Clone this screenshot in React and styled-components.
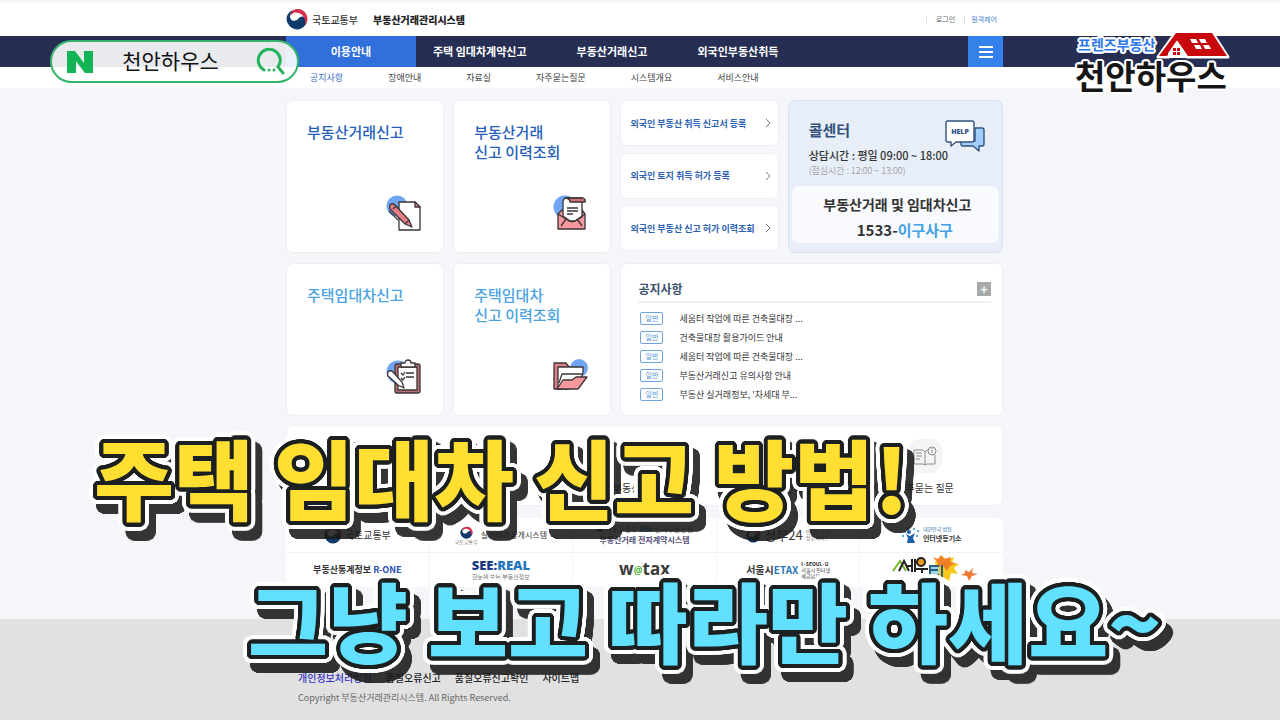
import React, { useState } from "react";
import styled, { createGlobalStyle } from "styled-components";

// text-shadow rings give the lettering a rounded outline
const ring = (radius, color, steps = 32) =>
	Array.from({ length: steps }, (_, i) => {
		const angle = (i / steps) * Math.PI * 2;
		const x = (Math.cos(angle) * radius).toFixed(1);
		const y = (Math.sin(angle) * radius).toFixed(1);
		return `${x}px ${y}px 0 ${color}`;
	}).join(", ");

const menu = ["이용안내", "주택 임대차계약신고", "부동산거래신고", "외국인부동산취득"];
const subMenu = ["공지사항", "장애안내", "자료실", "자주묻는질문", "시스템개요", "서비스안내"];
const notices = [
	"세움터 작업에 따른 건축물대장 ...",
	"건축물대장 활용가이드 안내",
	"세움터 작업에 따른 건축물대장 ...",
	"부동산거래신고 유의사항 안내",
	"부동산 실거래정보, '차세대 부...",
];
const foreignLinks = [
	"외국인 부동산 취득 신고서 등록",
	"외국인 토지 취득 허가 등록",
	"외국인 부동산 신고 허가 이력조회",
];
const footerLinks = ["개인정보처리방침", "품질오류신고", "품질오류신고확인", "사이트맵"];

const Taegeuk = ({ size = 22 }) => (
	<svg width={size} height={size} viewBox="0 0 24 24" aria-hidden="true">
		<path
			d="M6 3C1 6-1 12 2 17c3 6 10 8 15 5 4-2 6-6 5-10-1-3-5-4-8-1-2 3-5 4-8 2-3-3-2-7 2-10z"
			fill="#0c3a6b"
		/>
		<path d="M7 3c6-4 14-1 16 6 1 4 0 7-2 10 1-9-4-14-11-14-2 0-4 2-5 4 0-2 0-4 2-6z" fill="#d5304f" />
	</svg>
);

const PenPaperIcon = () => (
	<svg width="36" height="38" viewBox="0 0 36 38" stroke="#3c3434" strokeWidth="1.3" strokeLinejoin="round">
		<circle cx="11" cy="11" r="10.5" fill="#70a5f4" stroke="none" />
		<path d="M13 7h16l5 5v23H13z" fill="#fff" />
		<path d="M29 7v5h5z" fill="#f2949b" />
		<path d="M4 10c2-2 4-1 5 0l14 15 3 7-7-3L4 14q-1-2 0-4z" fill="#e57f87" />
		<path d="M3 16l9 9M19 29l4-4M7 14l3-3" fill="none" />
	</svg>
);

const MailIcon = () => (
	<svg width="36" height="38" viewBox="0 0 36 38" stroke="#3c3434" strokeWidth="1.3" strokeLinejoin="round">
		<circle cx="12" cy="12" r="11.5" fill="#70a5f4" stroke="none" />
		<path d="M5 19l4-4h20l3 4v15H5z" fill="#f6999f" />
		<path d="M10 21V7q0-4 4-4h15v19l-7 4h-5z" fill="#fff" />
		<path d="M13 3h17q3 1 2 4H17q0-3-4-4z" fill="#cf7078" />
		<path d="M5 19l11 7 3 1 3-1 10-7M8 31l5-7M29 31l-5-7" fill="none" />
		<path d="M14 13h11M14 16h11M14 19h6" />
	</svg>
);

const ClipboardIcon = () => (
	<svg width="36" height="38" viewBox="0 0 36 38" stroke="#3c3434" strokeWidth="1.3" strokeLinejoin="round">
		<circle cx="12" cy="14" r="11.5" fill="#70a5f4" stroke="none" />
		<rect x="9" y="6" width="25" height="29" rx="2" fill="#b96f77" />
		<path d="M12 9h19v23H12z" fill="#fff" />
		<path d="M15 9V5h4c0-4 6-4 6 0h4v4z" fill="#fff" />
		<path d="M15 15l2 2 2-3M15 20l2 2 2-3M20 15h8M20 19h8" fill="none" />
		<path d="M2 14c2-2 4-1 5 0l9 10 2 6-6-3L2 18q-1-2 0-4z" fill="#fff" />
	</svg>
);

const FolderIcon = () => (
	<svg width="36" height="38" viewBox="0 0 36 38" stroke="#3c3434" strokeWidth="1.3" strokeLinejoin="round">
		<circle cx="26" cy="10" r="9" fill="#70a5f4" stroke="none" />
		<path d="M1 31V5h12l3 4v22z" fill="#d98088" />
		<path d="M5 31V9h25v6l-3 8-20 8z" fill="#fff" />
		<path d="M6 25l3-9h20" fill="none" />
		<path d="M4 31l6-9h9l4-3h11l-9 12z" fill="#f6999f" />
	</svg>
);

const HelpIcon = () => (
	<svg width="40" height="32" viewBox="0 0 40 32" stroke="#34527f" strokeWidth="1.4" strokeLinejoin="round">
		<path d="M30 8h7q2 0 2 2v14q0 2-2 2h-3v5l-6-5H18q-2 0-2-2v-3h14z" fill="#9fd0fb" />
		<path d="M3 1h24q2 0 2 2v17q0 2-2 2H11l-5 4v-4H3q-2 0-2-2V3q0-2 2-2z" fill="#fff" />
		<text x="15" y="14" fontSize="7" fontWeight="800" fontFamily="Open Sans, sans-serif" textAnchor="middle" fill="#34527f" stroke="none">
			HELP
		</text>
	</svg>
);

const BookIcon = () => (
	<svg width="24" height="20" viewBox="0 0 24 20" fill="none" stroke="#8d8d8d" strokeWidth="1">
		<path d="M1 4h9l2 2 2-2h2M22 9v9H14l-2 1-2-1H1V4M12 6v13M3 7h6M3 10h6M3 13h4" />
		<circle cx="19" cy="5" r="4" />
		<path d="M19 4v3M19 2v1" />
	</svg>
);

const RoofIcon = () => (
	<svg width="74" height="29" viewBox="0 0 74 29">
		<path d="M2 27L20 2h36l16 25H31l-9-13-9 13z" fill="#c9080e" stroke="#fff" strokeWidth="3" strokeLinejoin="round" />
		<path d="M21 10l-9 13v5h18v-5z" fill="#fff" />
		<path d="M20 3L3 26h7L21 10l11 16h39L56 3z" fill="#c9080e" />
		<path d="M21 12l-9 12v3h19v-2z" fill="#fff" />
		<path d="M34 9h6l2 4h-6zM43 9h6l2 4h-6zM38 15h6l2 4h-6zM47 15h6l2 4h-6z" fill="#fff" />
		<path d="M17 18h3v3h-3zM21 18h3v3h-3zM17 22h3v3h-3zM21 22h3v3h-3z" fill="#c9080e" />
	</svg>
);

const SearchIcon = () => (
	<svg width="30" height="30" viewBox="0 0 30 30" fill="none" stroke="#27b35c" strokeWidth="3" strokeLinecap="round">
		<path d="M8 23A11 11 0 1 1 22 20l5 6" />
		<path d="M13 23h0M18 23h0" />
	</svg>
);

const CourtIcon = () => (
	<svg width="18" height="18" viewBox="0 0 18 18">
		<circle cx="7" cy="6" r="2" fill="#1c5fa8" />
		<path d="M4 8l4 2 5-3-2 5 2 5H5l1-5z" fill="#1c5fa8" />
		<path d="M2 5h2v2H2zM5 1h2v2H5zM11 2h2v2h-2zM15 4h2v2h-2zM14 9h2v2h-2zM0 9h2v2H0z" fill="#5aaee0" />
	</svg>
);

const SeumterLogo = () => (
	<svg width="94" height="32" viewBox="0 0 94 32">
		<path d="M50 7l5 1 2-6 5 4 7-3-2 6 7 1-5 4 4 6-7-1-2 8-6-4-6 4-1-7-5-2 5-4z" fill="#f9c81d" />
		<path d="M48 3l5 2 3-4 3 4 7-2-1 5 6 1-6 3-3 5-4-5-6 1 1-4z" fill="#f07f26" />
		<path d="M80 16l4 2 4-4-1 5 6 1-6 2-3 5-2-5-6-1 4-2z" fill="#ef7b35" />
		<path d="M8 17l7-10 6 10" fill="none" stroke="#79b829" strokeWidth="2" />
		<path d="M14 17l5-10 5 10M21 12h5M27 5v13M30 5v13" fill="none" stroke="#222" strokeWidth="2" />
		<circle cx="36" cy="8" r="4" fill="#f39b1e" stroke="#222" strokeWidth="2" />
		<path d="M31 15h12M37 15v4" stroke="#222" strokeWidth="2" />
		<path d="M45 12h9v9h-9z" fill="#9fd8ee" />
		<path d="M54 12h-9v9h9M45 16h8M57 11v12" fill="none" stroke="#2a5f7e" strokeWidth="2" />
	</svg>
);

const App = () => {
	const [query, setQuery] = useState("천안하우스");

	return (
		<Page>
			<GlobalStyle />
			<Header>
				<Shell>
					<Brand href="#">
						<Taegeuk />
						<Ministry>국토교통부</Ministry>
						<SystemName>부동산거래관리시스템</SystemName>
					</Brand>
					<UserLinks>
						<UserLink href="#">로그인</UserLink>
						<UserLink href="#" $blue>원격제어</UserLink>
					</UserLinks>
				</Shell>
			</Header>
			<NavBar>
				<Shell>
					{menu.map((item, i) => (
						<NavLink href="#" key={item} $active={i === 0}>{item}</NavLink>
					))}
					<MenuButton type="button" aria-label="전체메뉴">
						<svg width="14" height="12" viewBox="0 0 14 12" stroke="#fff" strokeWidth="2">
							<path d="M0 1h14M0 6h14M0 11h14" />
						</svg>
					</MenuButton>
				</Shell>
			</NavBar>
			<SubNav>
				<Shell>
					<SubList>
						{subMenu.map((item, i) => (
							<SubLink href="#" key={item} $active={i === 0}>{item}</SubLink>
						))}
					</SubList>
				</Shell>
			</SubNav>

			<Main>
				<Cards>
					<ServiceCard href="#">부동산거래신고<PenPaperIcon /></ServiceCard>
					<ServiceCard href="#">부동산거래<br />신고 이력조회<MailIcon /></ServiceCard>
					<LinkStack>
						{foreignLinks.map((item) => (
							<StackLink href="#" key={item}>
								{item}
								<svg width="6" height="10" viewBox="0 0 6 10" fill="none" stroke="#777">
									<path d="M1 1l4 4-4 4" />
								</svg>
							</StackLink>
						))}
					</LinkStack>
					<CallCenter>
						<CallTop>
							<CallTitle>콜센터</CallTitle>
							<HelpIcon />
						</CallTop>
						<CallHours>상담시간 : 평일 09:00 ~ 18:00</CallHours>
						<CallLunch>(점심시간 : 12:00 ~ 13:00)</CallLunch>
						<CallBox>
							<CallName>부동산거래 및 임대차신고</CallName>
							<CallNumber>1533-<span>이구사구</span></CallNumber>
						</CallBox>
					</CallCenter>
					<ServiceCard href="#" $light>주택임대차신고<ClipboardIcon /></ServiceCard>
					<ServiceCard href="#" $light>주택임대차<br />신고 이력조회<FolderIcon /></ServiceCard>
					<NoticeCard>
						<NoticeHead>
							<NoticeTitle>공지사항</NoticeTitle>
							<MoreButton type="button" aria-label="더보기">+</MoreButton>
						</NoticeHead>
						<NoticeList>
							{notices.map((item, i) => (
								<NoticeItem key={i}>
									<Tag>일반</Tag>
									<a href="#">{item}</a>
								</NoticeItem>
							))}
						</NoticeList>
					</NoticeCard>
				</Cards>

				<QuickLinks>
					<QuickLink href="#" $column={3}>부동산 실거래</QuickLink>
					<QuickLink href="#" $column={4}>이용 안내</QuickLink>
					<QuickLink href="#" $column={5}>
						<QuickIcon><BookIcon /></QuickIcon>
						자주묻는 질문
					</QuickLink>
				</QuickLinks>

				<Partners>
					<Partner href="#"><Taegeuk size={18} /><PartnerName $size={10}>국토교통부</PartnerName></Partner>
					<Partner href="#">
						<Stacked $center><Taegeuk size={13} /><Tiny>국토교통부</Tiny></Stacked>
						<PartnerName $size={8}>실거래가공개시스템</PartnerName>
					</Partner>
					<Partner href="#">
						<Stacked $center>
							<Tiny $size={7}><Taegeuk size={8} /> 국토교통부 <b>REB</b> 한국부동산원</Tiny>
							<PartnerName $size={8} $color="#55507a" $bold>부동산거래 전자계약시스템</PartnerName>
						</Stacked>
					</Partner>
					<Partner href="#">
						<Taegeuk size={15} />
						<PartnerName $size={13}>정부24</PartnerName>
						<Stacked><Tiny>민원안내 및</Tiny><Tiny>정부서비스</Tiny></Stacked>
					</Partner>
					<Partner href="#">
						<CourtIcon />
						<Stacked>
							<Tiny $color="#2b6ca8">대한민국 법원</Tiny>
							<PartnerName $size={7} $bold>인터넷등기소</PartnerName>
						</Stacked>
					</Partner>
					<Partner href="#">
						<PartnerName $size={9} $bold>부동산통계정보 <Latin $color="#2b4cb5">R-ONE</Latin></PartnerName>
					</Partner>
					<Partner href="#">
						<Stacked $center>
							<SeeReal>SEE:<span>REAL</span></SeeReal>
							<Tiny $size={6}>한눈에 보는 부동산정보</Tiny>
						</Stacked>
					</Partner>
					<Partner href="#"><Wetax>w<span>@</span>tax</Wetax></Partner>
					<Partner href="#">
						<PartnerName $size={10} $bold>서울시<Latin $color="#2b78b8">ETAX</Latin></PartnerName>
						<Stacked>
							<Tiny $color="#222"><b>I·SEOUL·U</b></Tiny>
							<Tiny $color="#333">서울시 인터넷</Tiny>
							<Tiny $color="#333">세금납부</Tiny>
						</Stacked>
					</Partner>
					<Partner href="#"><SeumterLogo /></Partner>
				</Partners>
			</Main>

			<Footer>
				<FooterInner>
					<FooterLinks>
						{footerLinks.map((item, i) => (
							<FooterLink href="#" key={item} $active={i === 0}>{item}</FooterLink>
						))}
					</FooterLinks>
					<Copyright>Copyright 부동산거래관리시스템. All Rights Reserved.</Copyright>
				</FooterInner>
			</Footer>

			<SearchPill onSubmit={(e) => e.preventDefault()}>
				<svg width="26" height="22" viewBox="0 0 26 22" fill="#12b456" aria-hidden="true">
					<path d="M0 0h8l9 12V0h9v22h-8L9 10v12H0z" />
				</svg>
				<SearchInput aria-label="검색어" value={query} onChange={(e) => setQuery(e.target.value)} />
				<SearchButton type="submit" aria-label="검색"><SearchIcon /></SearchButton>
			</SearchPill>

			<AgencyLogo>
				<AgencyTop><span>프렌즈부동산</span><RoofIcon /></AgencyTop>
				<AgencyName>천안하우스</AgencyName>
			</AgencyLogo>

			<Headline $top={428} $left={94} $fill="#ffdf32">주택 임대차 신고 방법!</Headline>
			<Headline $top={571} $left={248} $fill="#62e0ff">그냥 보고 따라만 하세요~</Headline>
		</Page>
	);
};

export default App;

const GlobalStyle = createGlobalStyle`
	* {
		box-sizing: border-box;
	}

	body {
		margin: 0;
		color: #333;
		font-family: "Noto Sans CJK KR", sans-serif;
		overflow: hidden;
	}

	a {
		color: inherit;
		text-decoration: none;
	}

	button, input {
		font-family: inherit;
	}

	svg {
		flex: none;
	}
`;

const Page = styled.div`
	position: relative;
	display: flex;
	flex-direction: column;
	min-height: 100vh;
	background: #f5f6f9;
	overflow: hidden;
`;

const Shell = styled.div`
	display: flex;
	align-items: stretch;
	max-width: 726px;
	margin: 0 auto;
	padding-left: 9px;
`;

const Header = styled.header`
	padding: 5px 0 6px;
	border-top: 3px solid #f5f6f8;
	background: #fff;
`;

const Brand = styled.a`
	display: flex;
	align-items: center;
	height: 22px;
`;

const Ministry = styled.span`
	margin-left: 4px;
	font-size: 10px;
	font-weight: 500;
`;

const SystemName = styled.strong`
	margin-left: 15px;
	color: #222;
	font-size: 10px;
	font-weight: 900;
`;

const UserLinks = styled.div`
	display: flex;
	align-items: center;
	margin-left: auto;
	padding-right: 6px;
`;

const UserLink = styled.a`
	margin-left: 9px;
	padding-left: ${(props) => (props.$blue ? 6 : 9)}px;
	border-left: 1px solid #ddd;
	color: ${(props) => (props.$blue ? "#4b8bd0" : "#666")};
	font-size: 7px;
	line-height: 7px;
`;

const NavBar = styled.nav`
	background: #262e54;
`;

const NavLink = styled.a`
	min-width: ${(props) => (props.$active ? 130 : 0)}px;
	padding: 0 ${(props) => (props.$active ? 0 : 33)}px 0 ${(props) => (props.$active ? 0 : 17)}px;
	background: ${(props) => (props.$active ? "#316fdb" : "transparent")};
	color: #fff;
	font-size: 11px;
	font-weight: 700;
	line-height: 31px;
	text-align: ${(props) => (props.$active ? "center" : "left")};
`;

const MenuButton = styled.button`
	display: flex;
	align-items: center;
	justify-content: center;
	width: 35px;
	margin-left: auto;
	padding: 0;
	border: none;
	background: #3481e9;
	cursor: pointer;
`;

const SubNav = styled.nav`
	background: #fff;
`;

const SubList = styled.div`
	display: flex;
	gap: 45px;
	padding-left: 24px;
`;

const SubLink = styled.a`
	color: ${(props) => (props.$active ? "#3b6fc9" : "#444")};
	font-size: 9px;
	line-height: 21px;
`;

const Main = styled.main`
	width: 100%;
	max-width: 726px;
	margin: 0 auto;
	padding: 12px 0 32px 9px;
`;

const Cards = styled.section`
	display: grid;
	grid-template-columns: 158fr 158fr 158fr 215fr;
	grid-auto-rows: 153px;
	gap: 10px 9px;
`;

const ServiceCard = styled.a`
	display: block;
	position: relative;
	padding: 21px 20px;
	border: 1px solid #edeff3;
	border-radius: 7px;
	background: #fff;
	color: ${(props) => (props.$light ? "#4aa3e2" : "#2460bb")};
	font-size: 15px;
	font-weight: 500;
	line-height: 20px;

	svg {
		position: absolute;
		right: 21px;
		bottom: 19px;
	}
`;

const LinkStack = styled.div`
	display: flex;
	flex-direction: column;
	justify-content: space-between;
	padding-bottom: 2px;
`;

const StackLink = styled.a`
	display: flex;
	align-items: center;
	justify-content: space-between;
	height: 46px;
	padding: 0 7px 0 9px;
	border: 1px solid #edeff3;
	border-radius: 7px;
	background: #fff;
	color: #2d62b3;
	font-size: 9px;
	font-weight: 700;
	white-space: nowrap;
`;

const CallCenter = styled.div`
	display: flex;
	flex-direction: column;
	padding: 19px 3px 9px;
	border: 1px solid #d7e2ee;
	border-radius: 7px;
	background: #e7eef7;
`;

const CallTop = styled.div`
	display: flex;
	justify-content: space-between;
	height: 26px;
	padding: 0 14px 0 17px;
`;

const CallTitle = styled.h2`
	margin: 0;
	color: #34527a;
	font-size: 15px;
	font-weight: 700;
	line-height: 20px;
`;

const CallHours = styled.p`
	margin: 0;
	padding-left: 17px;
	font-size: 11px;
	font-weight: 500;
	line-height: 18px;
`;

const CallLunch = styled.p`
	margin: 0;
	padding-left: 17px;
	color: #888;
	font-size: 9px;
	font-weight: 300;
	line-height: 14px;
`;

const CallBox = styled.div`
	flex: 1;
	margin-top: 8px;
	padding-top: 5px;
	border-radius: 7px;
	background: #f8fafd;
	text-align: center;
`;

const CallName = styled.p`
	margin: 0;
	padding-left: 4px;
	font-size: 14px;
	font-weight: 700;
	line-height: 26px;
`;

const CallNumber = styled.p`
	margin: 0;
	padding-left: 19px;
	font-size: 15px;
	font-weight: 700;
	line-height: 26px;

	span {
		color: #41a2e6;
	}
`;

const NoticeCard = styled.div`
	grid-column: span 2;
	padding: 13px 11px 14px 17px;
	border: 1px solid #edeff3;
	border-radius: 7px;
	background: #fff;
`;

const NoticeHead = styled.div`
	display: flex;
	align-items: center;
	justify-content: space-between;
	height: 26px;
	border-bottom: 2px solid #eff0f2;
`;

const NoticeTitle = styled.h2`
	margin: 0;
	color: #3c5270;
	font-size: 12px;
	font-weight: 700;
	line-height: 20px;
`;

const MoreButton = styled.button`
	width: 14px;
	height: 14px;
	padding: 0;
	border: none;
	background: #a9a9a9;
	color: #fff;
	font-size: 12px;
	font-weight: 700;
	line-height: 12px;
`;

const NoticeList = styled.ul`
	margin: 6px 0 0;
	padding: 0 0 0 2px;
	list-style: none;
`;

const NoticeItem = styled.li`
	display: flex;
	align-items: center;
	gap: 16px;
	height: 19px;
	font-size: 9px;
`;

const Tag = styled.span`
	width: 23px;
	border: 1px solid #6ea3e0;
	border-radius: 2px;
	color: #5a95dc;
	font-size: 7px;
	line-height: 11px;
	text-align: center;
`;

const QuickLinks = styled.section`
	display: grid;
	grid-template-columns: repeat(5, 1fr);
	height: 81px;
	margin-top: 9px;
	padding: 13px 6px 10px 0;
	border: 1px solid #f0f1f4;
	border-radius: 7px;
	background: #fff;
`;

const QuickLink = styled.a`
	display: flex;
	flex-direction: column;
	align-items: center;
	justify-content: flex-end;
	grid-column: ${(props) => props.$column};
	grid-row: 1;
	font-size: 10px;
	line-height: 17px;
`;

const QuickIcon = styled.span`
	display: flex;
	align-items: center;
	justify-content: center;
	width: 34px;
	height: 34px;
	margin-bottom: 6px;
	border-radius: 12px;
	background: #f4f4f4;
`;

const Partners = styled.section`
	display: grid;
	grid-template-columns: repeat(5, 1fr);
	grid-auto-rows: 34px;
	gap: 1px;
	margin-top: 12px;
	border-radius: 6px;
	background: #f3f3f5;
	overflow: hidden;
`;

const Partner = styled.a`
	display: flex;
	align-items: center;
	justify-content: center;
	gap: 3px;
	background: #fff;
	white-space: nowrap;
`;

const Stacked = styled.span`
	display: flex;
	flex-direction: column;
	align-items: ${(props) => (props.$center ? "center" : "flex-start")};
`;

const PartnerName = styled.span`
	color: ${(props) => props.$color || "#333"};
	font-size: ${(props) => props.$size}px;
	font-weight: ${(props) => (props.$bold ? 700 : 400)};
	line-height: 12px;
`;

const Latin = styled.span`
	color: ${(props) => props.$color};
`;

const Tiny = styled.span`
	color: ${(props) => props.$color || "#777"};
	font-size: ${(props) => props.$size || 5}px;
	line-height: ${(props) => (props.$size ? 9 : 6)}px;

	b {
		color: ${(props) => props.$color || "#2c8fc9"};
	}
`;

const SeeReal = styled.strong`
	color: #17398a;
	font-family: "Open Sans", sans-serif;
	font-size: 13px;
	font-weight: 800;
	line-height: 13px;

	span {
		color: #2476bd;
	}
`;

const Wetax = styled.strong`
	color: #3c3c3c;
	font-family: "Open Sans", sans-serif;
	font-size: 17px;
	line-height: 20px;

	span {
		color: #58b947;
		font-size: 10px;
		vertical-align: middle;
	}
`;

const Footer = styled.footer`
	flex: 1;
	padding: 49px 0 12px;
	background: #e1e1e1;
`;

const FooterInner = styled.div`
	max-width: 726px;
	margin: 0 auto;
	padding-left: 21px;
`;

const FooterLinks = styled.div`
	display: flex;
	gap: 14px;
`;

const FooterLink = styled.a`
	color: ${(props) => (props.$active ? "#3a35c0" : "#222")};
	font-size: 10px;
	font-weight: 500;
	line-height: 20px;
`;

const Copyright = styled.p`
	margin: 0;
	color: #666;
	font-size: 9px;
	line-height: 20px;
`;

const SearchPill = styled.form`
	display: flex;
	align-items: center;
	position: absolute;
	top: 40px;
	left: 50px;
	width: 249px;
	height: 43px;
	padding: 0 11px 0 15px;
	border: 2px solid #35b46c;
	border-radius: 22px;
	background: rgba(255, 255, 255, 0.9);
`;

const SearchInput = styled.input`
	flex: 1;
	min-width: 0;
	padding: 0 8px 3px 0;
	border: none;
	background: transparent;
	color: #111;
	font-size: 21px;
	text-align: center;
	outline: none;
`;

const SearchButton = styled.button`
	height: 30px;
	padding: 0;
	border: none;
	background: transparent;
	cursor: pointer;
`;

const AgencyLogo = styled.div`
	position: absolute;
	top: 29px;
	right: 50px;
	width: 155px;
`;

const AgencyTop = styled.div`
	display: flex;
	align-items: center;
	justify-content: space-between;
	height: 30px;
	color: #2c78ea;
	font-size: 14px;
	font-weight: 700;
	text-shadow: ${ring(2, "#fff", 16)};
	white-space: nowrap;

	span {
		margin-right: -6px;
		padding-left: 3px;
	}
`;

const AgencyName = styled.strong`
	display: block;
	color: #151515;
	font-size: 33px;
	font-weight: 700;
	line-height: 32px;
	text-shadow: ${ring(2, "#fff", 16)};
`;

const Headline = styled.h1`
	position: absolute;
	top: ${(props) => props.$top}px;
	left: ${(props) => props.$left}px;
	margin: 0;
	color: ${(props) => props.$fill};
	font-size: 87px;
	font-weight: 900;
	line-height: 96px;
	white-space: nowrap;
	text-shadow: ${ring(4, "#1d2020")}, ${ring(6, "#fff")}, ${ring(8, "#fff", 48)};
	filter: drop-shadow(7px 10px 0 rgba(25, 25, 25, 0.88));
	pointer-events: none;
`;
